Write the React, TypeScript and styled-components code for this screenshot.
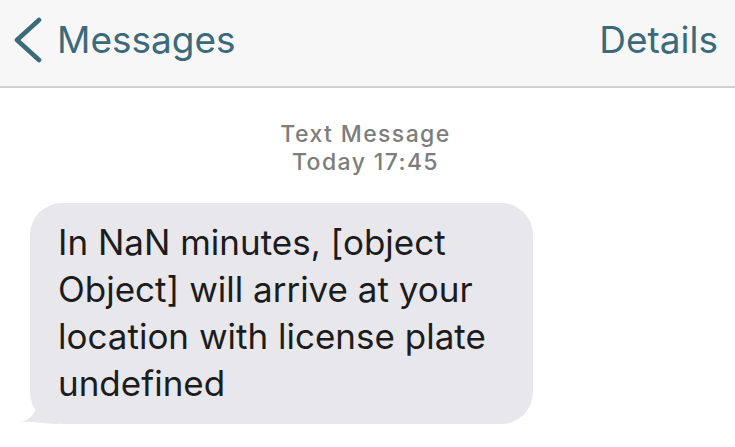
import React from "react";
import styled, { createGlobalStyle } from "styled-components";

const Global = createGlobalStyle`
  html, body { margin: 0; padding: 0; background: #ffffff; }
  body { font-family: Inter, "Liberation Sans", Arial, sans-serif; -webkit-font-smoothing: antialiased; }
`;

const Page = styled.div`
  width: 735px;
  height: 447px;
  overflow: hidden;
  background: #ffffff;
  display: flex;
  flex-direction: column;
`;

const NavBar = styled.header`
  height: 88px;
  flex: none;
  box-sizing: border-box;
  background: #f7f7f7;
  border-bottom: 2px solid #d2d2d2;
  display: flex;
  align-items: center;
  justify-content: space-between;
  padding: 0 17px 7px 12px;
`;

const NavButton = styled.button`
  border: 0;
  background: none;
  padding: 0;
  margin: 0;
  display: flex;
  align-items: center;
  gap: 15px;
  color: #3b6a7b;
  font-family: Inter, "Liberation Sans", Arial, sans-serif;
  font-size: 37px;
  font-weight: 400;
  cursor: pointer;
`;

const Chevron = styled.svg`
  width: 30px;
  height: 48px;
  display: block;
`;

const Thread = styled.main`
  display: flex;
  flex-direction: column;
  align-items: flex-start;
  padding: 32px 0 0 0;
`;

const Stamp = styled.div`
  align-self: center;
  text-align: center;
  color: #7d7d7d;
  font-family: Inter, "Liberation Sans", Arial, sans-serif;
  font-size: 23px;
  font-weight: 500;
  line-height: 28px;
  letter-spacing: 1.4px;
  margin-left: -4px;
`;

const BubbleWrap = styled.div`
  position: relative;
  margin: 27px 0 0 30px;
`;

const Bubble = styled.div`
  width: 503px;
  box-sizing: border-box;
  background: #e7e7ec;
  border-radius: 32px;
  padding: 16px 20px 17px 28px;
  color: #1c1c1c;
  font-family: Inter, "Liberation Sans", Arial, sans-serif;
  font-size: 35px;
  line-height: 47px;
`;

const Tail = styled.svg`
  position: absolute;
  left: -12px;
  bottom: 0;
  width: 40px;
  height: 30px;
`;

export default function App() {
  return (
    <>
      <Global />
      <Page>
        <NavBar>
          <NavButton>
            <Chevron viewBox="0 0 30 48">
              <path
                d="M27 4 L5 24 L27 44"
                fill="none"
                stroke="#3b6a7b"
                strokeWidth="4.6"
                strokeLinecap="round"
                strokeLinejoin="round"
              />
            </Chevron>
            Messages
          </NavButton>
          <NavButton>Details</NavButton>
        </NavBar>
        <Thread>
          <Stamp>
            Text Message
            <br />
            Today 17:45
          </Stamp>
          <BubbleWrap>
            <Tail viewBox="0 0 40 30">
              <path d="M2 28 C12 26 18 20 20 6 L20 0 L40 0 L40 30 C26 30 16 27 2 28 Z" fill="#e7e7ec" />
            </Tail>
            <Bubble>
              In NaN minutes, [object
              <br />
              Object] will arrive at your
              <br />
              location with license plate
              <br />
              undefined
            </Bubble>
          </BubbleWrap>
        </Thread>
      </Page>
    </>
  );
}
